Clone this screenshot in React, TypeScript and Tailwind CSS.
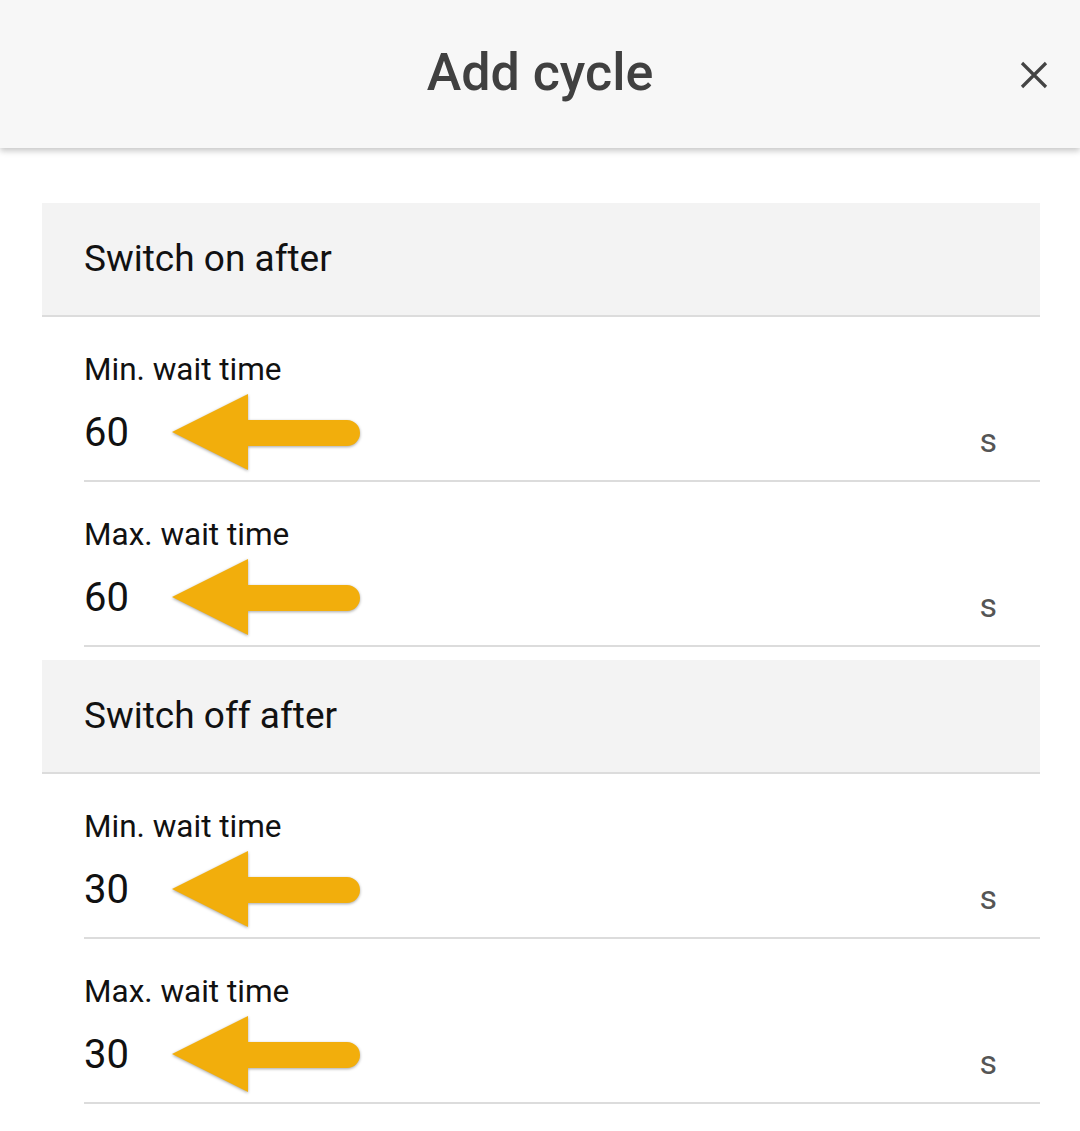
import React from "react";

function Arrow() {
  return (
    <svg width="196" height="84" viewBox="-2 -2 196 84" className="ml-[42px] shrink-0" style={{ filter: "drop-shadow(0px 1px 1.5px rgba(0,0,0,0.35))" }}>
      <path d="M0 38 L76 0 L76 26 L175 26 A13 13 0 0 1 175 52 L76 52 L76 76 Z" fill="#f2ae0c" />
    </svg>
  );
}

function Field({ label, value }: { label: string; value: string }) {
  return (
    <div className="ml-[42px] border-b-2 border-[#dcdcdc] pt-[35px] pb-[23px]">
      <div className="text-[31.5px] leading-[36px] text-[#111]">{label}</div>
      <div className="mt-[21px] flex items-center h-[48px]">
        <div className="text-[40px] leading-[48px] text-[#111] w-[88px]">{value}</div>
        <div className="-ml-[44px] mt-[1px]">
          <Arrow />
        </div>
        <div className="ml-auto mr-[43px] text-[34px] leading-[40px] text-[#555] mt-[13px]">s</div>
      </div>
    </div>
  );
}

function Section({ title, rows }: { title: string; rows: { label: string; value: string }[] }) {
  return (
    <div>
      <div className="h-[114px] bg-[#f3f3f3] border-b-2 border-[#dcdcdc] flex items-center pl-[42px]">
        <span className="text-[37px] text-[#111]">{title}</span>
      </div>
      {rows.map((r, i) => (
        <Field key={i} label={r.label} value={r.value} />
      ))}
    </div>
  );
}

export default function App() {
  return (
    <div className="w-[1080px] h-[1131px] bg-white overflow-hidden" style={{ fontFamily: "Roboto, 'Noto Sans', sans-serif" }}>
      <div className="relative h-[148px] bg-[#f7f7f7] shadow-[0_3px_6px_rgba(0,0,0,0.22)] flex items-center justify-center z-10">
        <span className="text-[52px] font-medium text-[#404040] -mt-[2px]">Add cycle</span>
        <svg className="absolute right-[31px] top-[60px]" width="30" height="30" viewBox="0 0 30 30">
          <path d="M3 3 L27 27 M27 3 L3 27" stroke="#444" strokeWidth="3.2" strokeLinecap="butt" />
        </svg>
      </div>
      <div className="pr-[40px] pl-[42px] pt-[55px]">
        <Section
          title="Switch on after"
          rows={[
            { label: "Min. wait time", value: "60" },
            { label: "Max. wait time", value: "60" },
          ]}
        />
        <div className="h-[13px]" />
        <Section
          title="Switch off after"
          rows={[
            { label: "Min. wait time", value: "30" },
            { label: "Max. wait time", value: "30" },
          ]}
        />
      </div>
    </div>
  );
}
